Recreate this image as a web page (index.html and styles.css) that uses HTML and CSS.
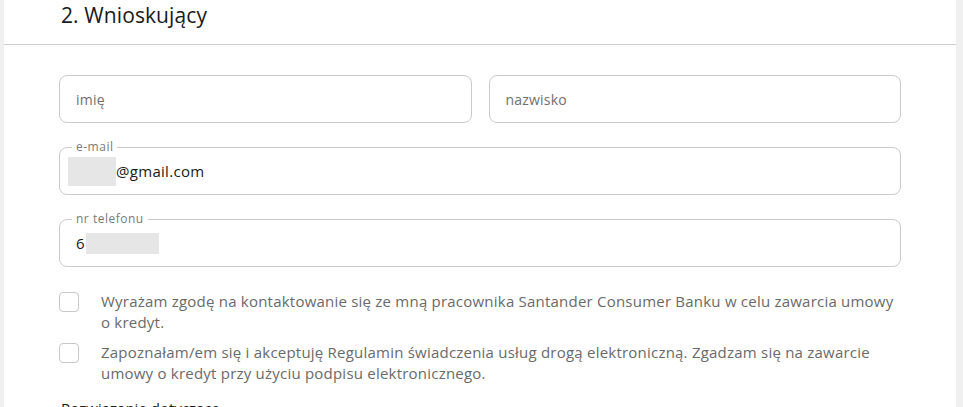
FILE: index.html
```html
<!DOCTYPE html>
<html lang="pl">
<head>
<meta charset="utf-8">
<link rel="stylesheet" href="styles.css">
</head>
<body>
<div class="page">
  <div class="header"><h2 class="title">2. Wnioskujący</h2></div>
  <div class="form">
    <div class="row two">
      <div class="field"><span class="placeholder">imię</span></div>
      <div class="field"><span class="placeholder">nazwisko</span></div>
    </div>
    <div class="row">
      <div class="field filled">
        <span class="label">e-mail</span>
        <span class="value"><span class="blur blur-email"></span>@gmail.com</span>
      </div>
    </div>
    <div class="row">
      <div class="field filled">
        <span class="label">nr telefonu</span>
        <span class="value"><span class="digit">6</span><span class="blur blur-phone"></span></span>
      </div>
    </div>
    <div class="checks">
      <label class="check"><span class="box"></span><span class="check-text">Wyrażam zgodę na kontaktowanie się ze mną pracownika Santander Consumer Banku w celu zawarcia umowy o kredyt.</span></label>
      <label class="check"><span class="box"></span><span class="check-text">Zapoznałam/em się i akceptuję Regulamin świadczenia usług drogą elektroniczną. Zgadzam się na zawarcie umowy o kredyt przy użyciu podpisu elektronicznego.</span></label>
    </div>
    <div class="next">Rozwiązanie dotyczące</div>
  </div>
</div>
</body>
</html>
```
FILE: styles.css
```css
* { box-sizing: border-box; }
html, body { margin: 0; padding: 0; }
body {
  background: #f0f0f0;
  font-family: "Open Sans", "DejaVu Sans", sans-serif;
  height: 407px;
  overflow: hidden;
}
.page {
  margin-left: 4px;
  width: 952px;
  background: #fff;
  min-height: 407px;
}
.header {
  height: 45px;
  border-bottom: 1px solid #cfcfcf;
  padding-left: 57px;
}
.title {
  margin: 0;
  font-weight: 400;
  font-size: 21px;
  line-height: 30px;
  color: #1a1a1a;
  letter-spacing: 0.1px;
}
.form {
  padding: 30px 55px 0 55px;
}
.row { margin-bottom: 24px; }
.row.two {
  display: grid;
  grid-template-columns: 1fr 1fr;
  gap: 17px;
}
.field {
  position: relative;
  height: 48px;
  border: 1px solid #cbcbcb;
  border-radius: 8px;
  display: flex;
  align-items: center;
  padding-left: 16px;
}
.placeholder {
  color: #707070;
  font-size: 14px;
  letter-spacing: 0.2px;
}
.label {
  position: absolute;
  left: 12px;
  top: -9px;
  padding: 0 4px;
  background: #fff;
  font-size: 12px;
  line-height: 16px;
  color: #7a7a7a;
  letter-spacing: 0.5px;
}
.value {
  display: flex;
  align-items: center;
  font-size: 15px;
  color: #1a1a1a;
  letter-spacing: 0.3px;
}
.filled { padding-left: 8px; }
.blur {
  display: inline-block;
  background: #e6e6e6;
}
.blur-email { width: 48px; height: 29px; }
.digit { margin-left: 8px; }
.blur-phone { width: 73px; height: 21px; margin-left: 1px; }
.checks {
  display: flex;
  flex-direction: column;
  gap: 9px;
}
.check {
  display: flex;
  align-items: flex-start;
  gap: 22px;
}
.box {
  flex: none;
  width: 20px;
  height: 20px;
  border: 1px solid #c8c8c8;
  border-radius: 4px;
  margin-top: 1px;
}
.check-text {
  font-size: 15px;
  line-height: 21px;
  color: #6a6a6a;
  letter-spacing: 0.22px;
}
.next {
  margin-top: 14px;
  padding-left: 2px;
  font-size: 15px;
  line-height: 20px;
  color: #1a1a1a;
}
```
